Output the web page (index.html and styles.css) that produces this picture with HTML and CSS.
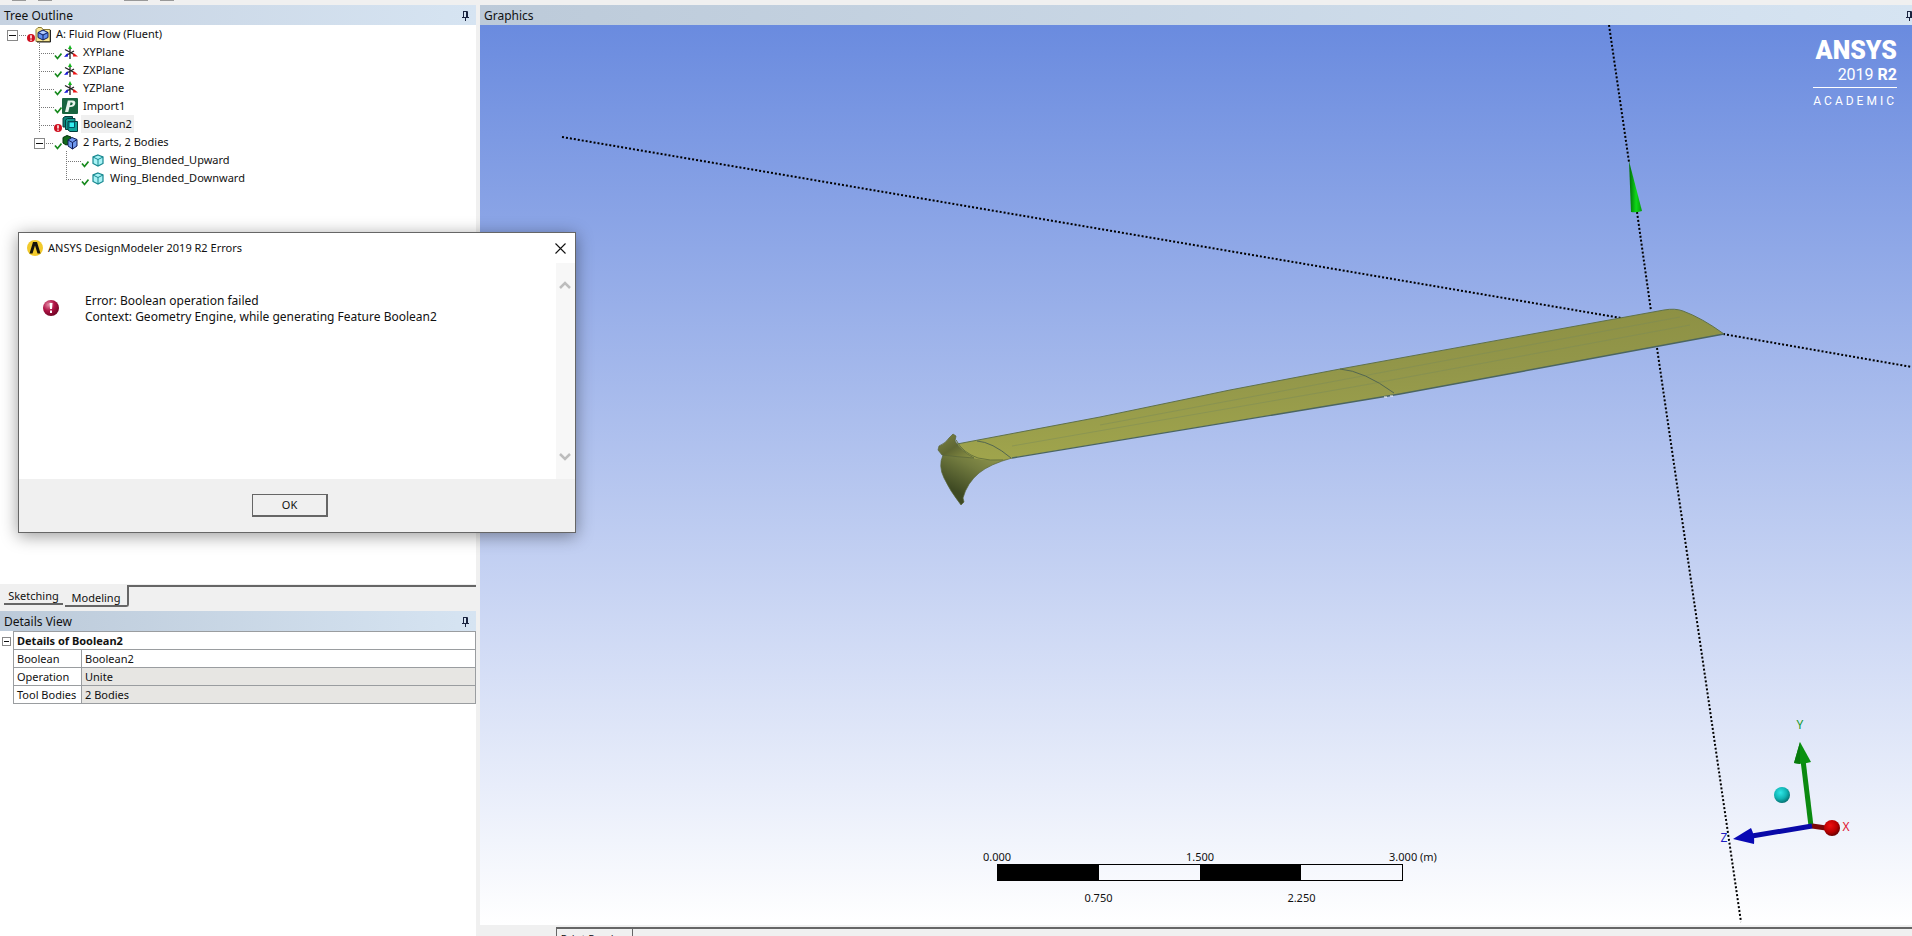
FILE: index.html
```html
<!DOCTYPE html>
<html lang="en">
<head>
<meta charset="utf-8">
<title>A: Fluid Flow (Fluent) - DesignModeler</title>
<link rel="stylesheet" href="styles.css">
</head>
<body>
<svg class="defs" aria-hidden="true">
  <defs>
    <linearGradient id="wing-fill" x1="0" y1="0" x2="0.15" y2="1">
      <stop offset="0" stop-color="#8b8e42"/><stop offset="0.5" stop-color="#93974a"/><stop offset="1" stop-color="#a0a54c"/>
    </linearGradient>
    <linearGradient id="upper-tip" x1="0" y1="0" x2="1" y2="1">
      <stop offset="0" stop-color="#7f8444"/><stop offset="0.5" stop-color="#5f6733"/><stop offset="1" stop-color="#8e9446"/>
    </linearGradient>
    <linearGradient id="lower-tip" x1="0.9" y1="0" x2="0.3" y2="0.8">
      <stop offset="0" stop-color="#989d50"/><stop offset="0.5" stop-color="#727b3f"/><stop offset="1" stop-color="#3f4a23"/>
    </linearGradient>
    <linearGradient id="cone" x1="0" x2="1" y1="0" y2="0">
      <stop offset="0" stop-color="#006a08"/><stop offset="0.55" stop-color="#0fd818"/><stop offset="1" stop-color="#059a0c"/>
    </linearGradient>
    <radialGradient id="cyan-ball" cx="0.4" cy="0.35" r="0.65">
      <stop offset="0" stop-color="#2fe6e6"/><stop offset="0.6" stop-color="#10b4b4"/><stop offset="1" stop-color="#067474"/>
    </radialGradient>
    <radialGradient id="red-ball" cx="0.4" cy="0.35" r="0.7">
      <stop offset="0" stop-color="#ee1010"/><stop offset="0.6" stop-color="#b80000"/><stop offset="1" stop-color="#5a0000"/>
    </radialGradient>
    <radialGradient id="error-ball" cx="0.35" cy="0.3" r="0.75">
      <stop offset="0" stop-color="#e58aa6"/><stop offset="0.5" stop-color="#b01345"/><stop offset="1" stop-color="#6b0322"/>
    </radialGradient>
    <symbol id="branch-mid" viewBox="0 0 20 18"><path d="M5.5 0V18M7 10.500H20" fill="none" stroke="#777" stroke-dasharray="1 1"/></symbol>
    <symbol id="branch-last" viewBox="0 0 20 18"><path d="M5.500 0V11M7 10.500H20" fill="none" stroke="#777" stroke-dasharray="1 1"/></symbol>
    <symbol id="stub" viewBox="0 0 9 18"><path d="M1 10.500H9" stroke="#777" stroke-dasharray="1 1"/></symbol>
    <symbol id="check" viewBox="0 0 8 18"><path d="M1 12.500L3.500 15.500L7.500 10.500" fill="none" stroke="#16891c" stroke-width="1.700"/></symbol>
    <symbol id="fail" viewBox="0 0 8 18"><circle cx="4" cy="13" r="4" fill="#cf1120"/><path d="M4 10.300V13.500M4 14.500V15.800" stroke="#fff" stroke-width="1.500"/></symbol>
    <symbol id="plane" viewBox="0 0 16 18">
      <path d="M8 4V16M3 6.500L13 12M4 12.500L12 8" stroke="#222" stroke-width="1.300"/>
      <path d="M8 2L10 6H6z" fill="#12b51a"/><path d="M5.500 10L6 13.500L2 14z" fill="#1414d8"/><path d="M11.500 10L16 13.500L11 13.500z" fill="#ee1414"/>
    </symbol>
    <symbol id="project" viewBox="0 0 16 18">
      <path d="M1 4.500L3 2.500H6.500L8 4.500H15V16.500H1z" fill="#f8e795" stroke="#8a7a35"/><path d="M15.500 5V17H2" fill="none" stroke="#222"/>
      <path d="M8 5L13 7.500V12.500L8 15L3 12.500V7.500z" fill="#5f8ff0" stroke="#12205c"/><path d="M3 7.500L8 10L13 7.500M8 10V15" fill="none" stroke="#12205c"/>
      <path d="M4.500 7.500L8 6L11.500 7.500L8 9z" fill="#b7cffb"/>
    </symbol>
    <symbol id="import" viewBox="0 0 16 18">
      <rect y="1" width="16" height="16" rx="1" fill="#17643f"/><path d="M3 15L5.800 3.500H10.500Q14 3.700 13.200 7Q12.300 10 8.500 10H7.500L6.300 15z" fill="#e8f3ec"/><path d="M8.600 5.300L7.900 8.300Q10.400 8.400 10.800 6.800Q11.100 5.300 8.600 5.300z" fill="#17643f"/>
    </symbol>
    <symbol id="boolean" viewBox="0 0 16 18">
      <path d="M1 3L3 1.500H10.500V12H1z" fill="#0c8078" stroke="#043c3c"/><path d="M3.500 5L5.500 3.500H13V14.500H3.500z" fill="#139b92" stroke="#043c3c"/><path d="M6 6.500H15.500V16.500H8L6 15z" fill="#10a49b" stroke="#043c3c"/><path d="M7 7H12.500V12.500H7z" fill="#35eef0" stroke="#056"/>
    </symbol>
    <symbol id="parts" viewBox="0 0 16 18">
      <path d="M1 4.500L5 2.500L9 4V10L4 12L1 10z" fill="#13691c" stroke="#052f0a"/>
      <path d="M10 4.500L15 6.500V13L10.500 16L6 13V7z" fill="#6f98ee" stroke="#101c58"/><path d="M6 7L10.500 9.500L15 6.500M10.500 9.500V16" fill="none" stroke="#101c58"/>
    </symbol>
    <symbol id="body" viewBox="0 0 16 18">
      <path d="M9 4L14 6V12.500L9 15L4 12.500V6z" fill="#a9f3f6" stroke="#16878f" stroke-width="1.200"/><path d="M4 6L9 8.500L14 6M9 8.500V15" fill="none" stroke="#16878f"/>
    </symbol>
    <symbol id="pin" viewBox="0 0 9 12"><path d="M2.500 1.500H6.500V7.500M2.500 1V7.500M1 7.500H8M4.500 8V11" fill="none" stroke="#1a2440"/><path d="M5.500 1V7.500" stroke="#1a2440"/></symbol>
  </defs>
</svg>

<div class="app">
  <header class="toolbar-edge"><i></i><i></i><i></i><i></i></header>
  <main class="workspace">
    <aside class="sidebar">
      <section class="outline">
        <h2 class="title">Tree Outline<button class="pin" aria-label="Pin Tree Outline"><svg width="9" height="12"><use href="#pin"/></svg></button></h2>
        <ul class="tree">
          <li>
            <div class="row"><button class="toggle" aria-label="Collapse project"></button><svg class="stub"><use href="#stub"/></svg><svg class="status"><use href="#fail"/></svg><svg class="icon"><use href="#project"/></svg><span class="label">A: Fluid Flow (Fluent)</span></div>
            <ul>
              <li><div class="row"><svg class="branch"><use href="#branch-mid"/></svg><svg class="status"><use href="#check"/></svg><svg class="icon"><use href="#plane"/></svg><span class="label">XYPlane</span></div></li>
              <li><div class="row"><svg class="branch"><use href="#branch-mid"/></svg><svg class="status"><use href="#check"/></svg><svg class="icon"><use href="#plane"/></svg><span class="label">ZXPlane</span></div></li>
              <li><div class="row"><svg class="branch"><use href="#branch-mid"/></svg><svg class="status"><use href="#check"/></svg><svg class="icon"><use href="#plane"/></svg><span class="label">YZPlane</span></div></li>
              <li><div class="row"><svg class="branch"><use href="#branch-mid"/></svg><svg class="status"><use href="#check"/></svg><svg class="icon"><use href="#import"/></svg><span class="label">Import1</span></div></li>
              <li><div class="row"><svg class="branch"><use href="#branch-mid"/></svg><svg class="status"><use href="#fail"/></svg><svg class="icon"><use href="#boolean"/></svg><span class="label current">Boolean2</span></div></li>
              <li>
                <div class="row"><button class="toggle" aria-label="Collapse parts"></button><svg class="stub"><use href="#stub"/></svg><svg class="status"><use href="#check"/></svg><svg class="icon"><use href="#parts"/></svg><span class="label">2 Parts, 2 Bodies</span></div>
                <ul>
                  <li><div class="row"><svg class="branch"><use href="#branch-mid"/></svg><svg class="status"><use href="#check"/></svg><svg class="icon"><use href="#body"/></svg><span class="label">Wing_Blended_Upward</span></div></li>
                  <li><div class="row"><svg class="branch"><use href="#branch-last"/></svg><svg class="status"><use href="#check"/></svg><svg class="icon"><use href="#body"/></svg><span class="label">Wing_Blended_Downward</span></div></li>
                </ul>
              </li>
            </ul>
          </li>
        </ul>
        <nav class="tabs"><button class="tab">Sketching</button><button class="tab selected">Modeling</button><span class="rule"></span></nav>
      </section>
      <section class="details">
        <h2 class="title deep">Details View<button class="pin" aria-label="Pin Details View"><svg width="9" height="12"><use href="#pin"/></svg></button></h2>
        <div class="properties">
          <button class="toggle small" aria-label="Collapse details"></button>
          <table>
            <colgroup><col class="name-col"><col></colgroup>
            <thead><tr><th colspan="2">Details of Boolean2</th></tr></thead>
            <tbody>
              <tr><td class="name">Boolean</td><td>Boolean2</td></tr>
              <tr><td class="name">Operation</td><td class="locked">Unite</td></tr>
              <tr><td class="name">Tool Bodies</td><td class="locked">2 Bodies</td></tr>
            </tbody>
          </table>
        </div>
      </section>
    </aside>

    <section class="graphics">
      <h2 class="title deep">Graphics<button class="pin edge" aria-label="Pin Graphics"><svg width="9" height="12"><use href="#pin"/></svg></button></h2>
      <div class="viewport">
        <svg class="scene" viewBox="480 25 1432 900" preserveAspectRatio="xMidYMid slice" role="img" aria-label="Blended wing model">
          <g fill="none" stroke="#000" stroke-width="2" stroke-dasharray="2 2">
            <path d="M1609 25L1629 162M1637 212L1651 311M1657 348L1741 922"/>
            <path d="M562 137L1621 318M1723 334L1912 367"/>
          </g>
          <path d="M1629 161L1642 211Q1636 213 1631 212z" fill="url(#cone)"/>
          <path d="M943 455Q938 466 944 478Q950 491 961 505L964 502L963 498Q967 483 979 473Q990 464 1012 458L974 452z" fill="url(#lower-tip)" stroke="#59663a" stroke-width="0.700"/>
          <path d="M957 444L1100 417L1230 390L1340 369L1664 310Q1675 308 1683 311Q1702 318 1724 334L1400 394L1012 458Q990 462 972 458Q962 452 957 444z" fill="url(#wing-fill)"/>
          <path d="M957 444L1100 417L1230 390L1340 369L1664 310Q1675 308 1683 311Q1702 318 1724 334" fill="none" stroke="#5f714b"/>
          <path d="M1724 334L1400 394L1012 458" fill="none" stroke="#4b6560" stroke-width="1.400"/>
          <path d="M1012 446L1370 384L1690 325M1100 425L1400 369L1680 317" fill="none" stroke="#7b8b58" opacity="0.500"/>
          <path d="M977 441Q992 442 1011 458M1340 369Q1364 371 1394 393" fill="none" stroke="#536650"/>
          <path d="M1384 397H1387M1390 396H1393" stroke="#fff"/>
          <path d="M953 434L956 436L955 441Q961 451 974 458Q958 457 942 455L938 450L939 446Q946 443 949 438z" fill="url(#upper-tip)" stroke="#59663a" stroke-width="0.700"/>
          <path d="M956 440Q963 453 978 458Q990 461 1003 460" fill="none" stroke="#69753d"/>
          <path d="M1811 826L1803 760" stroke="#0b8a10" stroke-width="5"/>
          <path d="M1800 742L1811 762Q1802 765 1794 763z" fill="#0b9211"/><path d="M1800 742L1800 764L1794 763z" fill="#077a0c"/>
          <path d="M1812 826L1826 828" stroke="#7c0808" stroke-width="5"/>
          <path d="M1812 826L1752 836" stroke="#0909a8" stroke-width="5"/>
          <path d="M1733 839L1751 828Q1755 836 1754 844z" fill="#0909b4"/>
          <circle cx="1832" cy="828" r="8" fill="url(#red-ball)"/>
          <circle cx="1782" cy="795" r="8" fill="url(#cyan-ball)"/>
          <g class="axis-label"><text x="1800" y="729" fill="#159a2b">Y</text><text x="1846" y="831" fill="#e01530">X</text><text x="1724" y="842" fill="#1b1bc0">Z</text></g>
        </svg>
        <div class="brand"><strong>ANSYS</strong><span>2019 <b>R2</b></span><small>ACADEMIC</small></div>
        <div class="scale">
          <div class="marks"><span>0.000</span><span>1.500</span><span>3.000 (m)</span></div>
          <div class="bar"><i></i><i></i><i></i><i></i></div>
          <div class="marks below"><span>0.750</span><span>2.250</span></div>
        </div>
      </div>
      <nav class="view-tabs"><span class="lead"></span><button class="view-tab">Print Preview</button><span class="rest"></span></nav>
    </section>
  </main>
</div>

<div class="dialog" role="dialog" aria-labelledby="dialog-title">
  <header class="dialog-head">
    <svg width="16" height="16" viewBox="0 0 16 16"><circle cx="8" cy="8" r="8" fill="#f2ca2c"/><path d="M2.500 13.500L6 2H10L13.500 13.500H10.500L8 5.500L5.500 13.500z" fill="#15130c"/></svg>
    <span id="dialog-title">ANSYS DesignModeler 2019 R2 Errors</span>
    <button class="close" aria-label="Close"><svg width="11" height="11" viewBox="0 0 11 11"><path d="M.5.500L10.500 10.500M10.500.500L.5 10.500" stroke="#111" stroke-width="1.100"/></svg></button>
  </header>
  <div class="dialog-body">
    <svg width="16" height="16" viewBox="0 0 16 16"><circle cx="8" cy="8" r="8" fill="url(#error-ball)"/><path d="M6.500 3H9.500L9 9H7z" fill="#fff"/><rect x="7" y="10.500" width="2" height="2.500" fill="#fff"/></svg>
    <p>Error: Boolean operation failed<br>Context: Geometry Engine, while generating Feature Boolean2</p>
    <div class="scroll">
      <button aria-label="Scroll up"><svg width="12" height="8" viewBox="0 0 12 8"><path d="M1 7L6 2L11 7" fill="none" stroke="#bdbdbd" stroke-width="2.500"/></svg></button>
      <button aria-label="Scroll down"><svg width="12" height="8" viewBox="0 0 12 8"><path d="M1 1L6 6L11 1" fill="none" stroke="#bdbdbd" stroke-width="2.500"/></svg></button>
    </div>
  </div>
  <footer class="dialog-foot"><button class="ok">OK</button></footer>
</div>
</body>
</html>
```
FILE: styles.css
```css
* { box-sizing: border-box; }
body { margin: 0; font: 11px/18px "Noto Sans", "Open Sans", sans-serif; color: #111; background: #f0f0f0; overflow: hidden; }
button { font: inherit; color: inherit; background: none; border: 0; padding: 0; margin: 0; }
svg { display: block; flex: none; }
ul { list-style: none; margin: 0; padding: 0; }
.defs { position: absolute; width: 0; height: 0; }

.app { display: flex; flex-direction: column; height: 100vh; }
.toolbar-edge { flex: none; display: flex; gap: 12px; height: 5px; padding-left: 12px; background: #f0f0f0; }
.toolbar-edge i { width: 14px; height: 1px; background: #999; }
.toolbar-edge i:nth-child(3) { margin-left: 60px; width: 24px; }
.workspace { flex: 1; min-height: 0; display: grid; grid-template-columns: 476px 1fr; column-gap: 4px; }
.title { flex: none; display: flex; align-items: center; justify-content: space-between; height: 20px; margin: 0; padding: 1px 6px 0 4px; font-size: 12px; font-weight: 400; background: linear-gradient(90deg, #c6d2e1, #d6e4f2); }
.title.deep { background: linear-gradient(90deg, #bccad9, #d6e4f2); }
.pin.edge { margin-right: -8px; }

.sidebar { display: flex; flex-direction: column; min-height: 0; background: #fff; }
.outline { display: flex; flex-direction: column; flex: 606; min-height: 0; }
.details { flex: 325; }
.tree { flex: 1; }
.tree ul { padding-left: 27px; }
.row { display: flex; align-items: center; height: 18px; }
.tree > li { padding-left: 7px; }
.toggle { position: relative; flex: none; width: 11px; height: 11px; margin-top: 2px; border: 1px solid #888; background: #fff; }
.toggle::after { content: ""; position: absolute; left: 1px; right: 1px; top: 4px; height: 1px; background: #111; }
.toggle.small { width: 9px; height: 9px; }
.toggle.small::after { top: 3px; }
.stub { width: 9px; height: 18px; }
.branch { width: 20px; height: 18px; }
.status { width: 8px; height: 18px; }
.icon { width: 16px; height: 18px; }
.label { margin-left: 3px; padding: 0 2px; font-size: 12px; font-size: 11px; }
.label.current { background: #f0f0f0; }

.tabs { flex: none; display: flex; align-items: flex-start; height: 27px; padding: 1px 0 0 4px; background: #f0f0f0; }
.tab { height: 20px; width: 59px; line-height: 18px; padding-top: 2px; border-bottom: 2px solid #666; }
.tab.selected { height: 22px; width: 64px; margin-left: 2px; padding-top: 4px; border-right: 2px solid #666; border-radius: 0 0 3px 0; }
.rule { flex: 1; height: 2px; background: #666; }

.properties { display: flex; gap: 2px; padding-left: 2px; }
.properties .toggle { margin-top: 6px; }
table { flex: 1; width: 100%; border-collapse: collapse; table-layout: fixed; }
.name-col { width: 68px; }
th, td { height: 18px; padding: 0 3px; line-height: 17px; text-align: left; border: 1px solid #9a9da0; }
.name { white-space: nowrap; }
.locked { background: #e7e6e3; }

.graphics { display: flex; flex-direction: column; min-width: 0; min-height: 0; overflow: hidden; }
.viewport { position: relative; flex: 1; min-height: 0; overflow: hidden; background: linear-gradient(#6a8bdf, #fff); }
.scene { width: 100%; height: 100%; }
.axis-label { font-size: 12px; text-anchor: middle; }
.brand { position: absolute; top: 11px; right: 15px; display: flex; flex-direction: column; align-items: flex-end; color: #fff; font-family: Roboto, "Open Sans", sans-serif; }
.brand strong { font-size: 25px; font-weight: 900; line-height: 29px; }
.brand span { font-size: 16px; line-height: 19px; }
.brand small { margin-top: 3px; padding-top: 4px; font-size: 12px; line-height: 18px; letter-spacing: 3px; border-top: 1px solid #fff; }
.scale { position: absolute; left: 36.100%; bottom: 18px; width: 406px; }
.bar { display: grid; grid-template-columns: repeat(4, 1fr); height: 17px; border: 1px solid #000; }
.bar i:nth-child(odd) { background: #000; }
.marks { display: flex; justify-content: space-between; height: 15px; margin: 0 -34px 0 -14px; line-height: 16px; }
.marks.below { justify-content: space-around; height: 26px; margin: 0; padding-top: 9px; }
.view-tabs { flex: none; display: flex; height: 11px; padding-top: 2px; overflow: hidden; background: #f0f0f0; }
.lead { width: 76px; }
.view-tab { width: 77px; height: 22px; border: 1px solid #666; border-top-width: 2px; }
.rest { flex: 1; height: 2px; background: #666; }

.dialog { position: absolute; left: 18px; top: 232px; width: 558px; display: flex; flex-direction: column; background: #fff; border: 1px solid #666; box-shadow: 0 3px 16px rgba(0, 0, 0, 0.4); }
.dialog-head { display: flex; align-items: center; gap: 5px; height: 30px; padding: 0 9px 0 8px; }
.close { margin-left: auto; }
.dialog-body { display: flex; height: 216px; padding-left: 24px; }
.dialog-body > svg { margin-top: 37px; }
.dialog-body p { flex: 1; margin: 30px 0 0 26px; font-size: 12px; line-height: 16px; }
.scroll { display: flex; flex-direction: column; justify-content: space-between; width: 19px; padding: 18px 0 18px 3px; background: #f7f7f7; }
.dialog-foot { display: flex; justify-content: center; padding: 15px 14px 15px 0; background: #f0f0f0; }
.ok { width: 76px; height: 23px; border: 1px solid #666; border-right-width: 2px; border-bottom-width: 2px; }
```
